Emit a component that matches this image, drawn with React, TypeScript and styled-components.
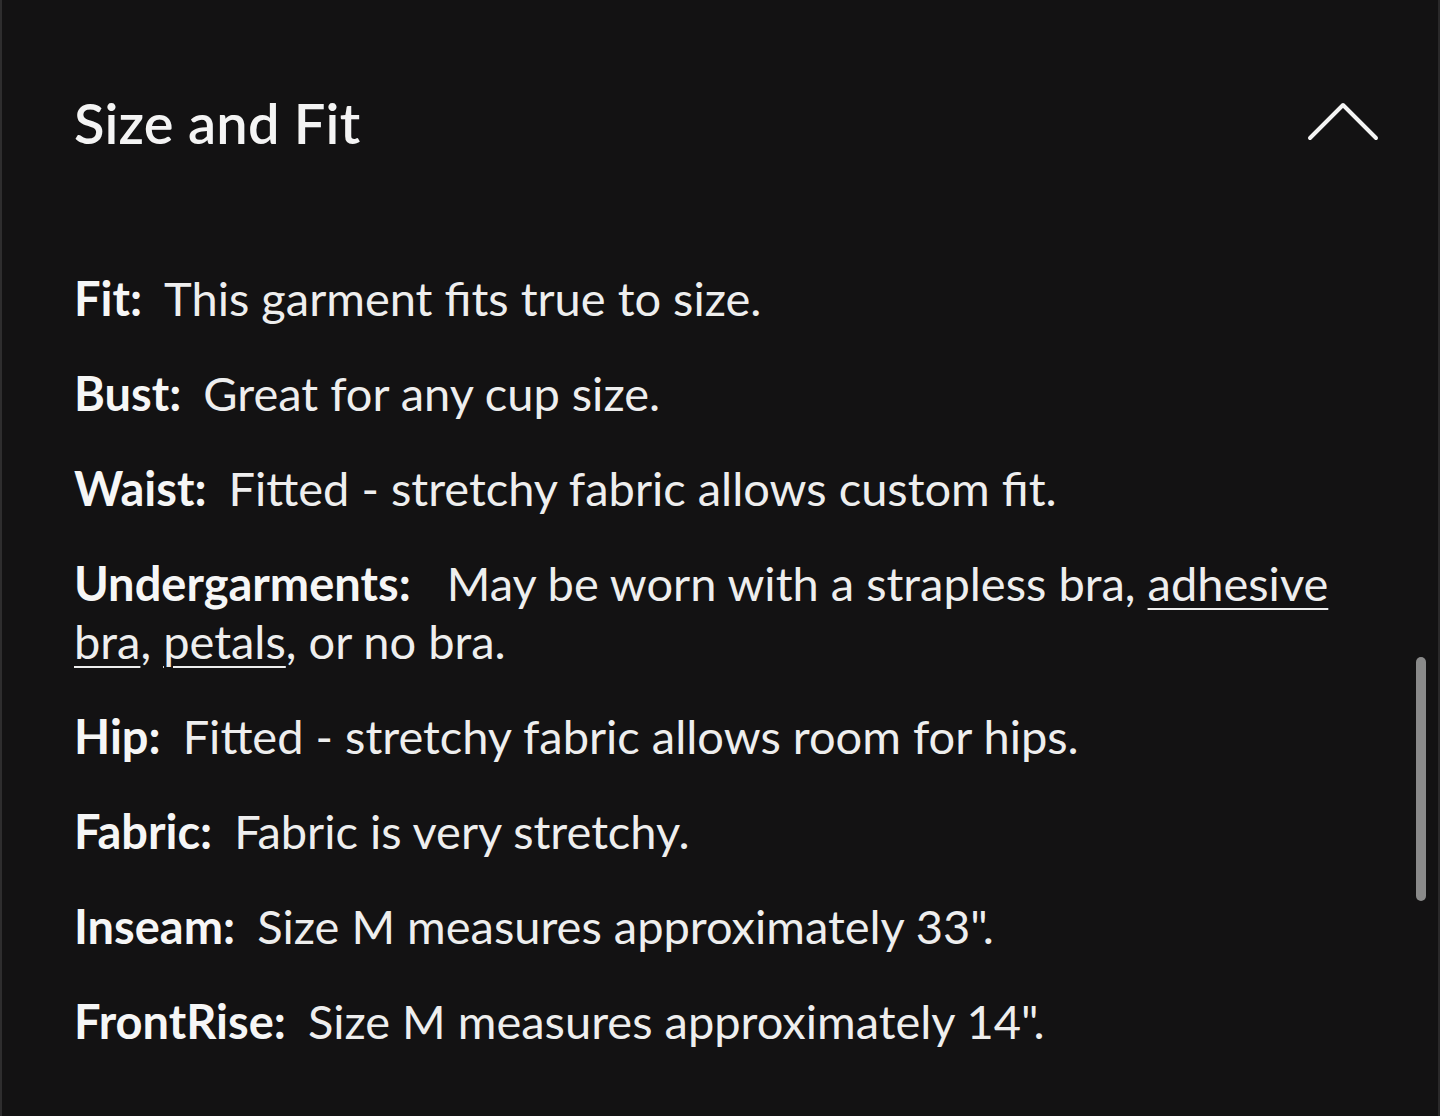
import styled, { createGlobalStyle } from "styled-components";

const GlobalStyle = createGlobalStyle`
  html, body {
    margin: 0;
    padding: 0;
    background: #131213;
  }
  body {
    font-family: Lato, "Open Sans", sans-serif;
    -webkit-font-smoothing: antialiased;
  }
`;

const Panel = styled.section`
  position: relative;
  box-sizing: border-box;
  width: 1440px;
  height: 1116px;
  overflow: hidden;
  background: #131213;
  border-left: 2px solid #2e2d2e;
  border-right: 2px solid #2a292a;
  padding: 0 58px 0 72px;
  color: #f2f2f2;
`;

const Header = styled.header`
  display: flex;
  align-items: center;
  justify-content: space-between;
  height: 244px;
`;

const Title = styled.h2`
  margin: 0;
  font-size: 56px;
  font-weight: 600;
  letter-spacing: 0.2px;
  color: #f4f4f4;
`;

const Toggle = styled.button`
  display: flex;
  align-items: center;
  justify-content: center;
  width: 74px;
  height: 44px;
  padding: 0;
  border: 0;
  background: none;
  color: #f4f4f4;
  cursor: pointer;
`;

const List = styled.dl`
  display: flex;
  flex-direction: column;
  gap: 37px;
  margin: 0;
  padding-top: 25px;
`;

const Row = styled.div`
  font-size: 47px;
  line-height: 58px;
  color: #eeeeee;
`;

const Label = styled.dt<{ $gap: number }>`
  display: inline;
  font-weight: 700;
  color: #f6f6f6;
  margin-right: ${(p) => p.$gap}px;
`;

const Value = styled.dd`
  display: inline;
  margin: 0;
`;

const TextLink = styled.a`
  color: inherit;
  text-decoration: underline;
  text-decoration-thickness: 2px;
  text-underline-offset: 7px;
`;

const ScrollThumb = styled.div`
  position: absolute;
  right: 12px;
  top: 657px;
  width: 10px;
  height: 244px;
  border-radius: 5px;
  background: #8a8a8a;
`;

const Chevron = () => (
  <svg width="74" height="42" viewBox="0 0 74 42" fill="none">
    <path
      d="M4 37 L37 4 L70 37"
      stroke="currentColor"
      strokeWidth="4"
      strokeLinecap="round"
      strokeLinejoin="round"
    />
  </svg>
);

const rows = [
  { label: "Fit:", gap: 22, value: "This garment fits true to size." },
  { label: "Bust:", gap: 22, value: "Great for any cup size." },
  { label: "Waist:", gap: 22, value: "Fitted - stretchy fabric allows custom fit." },
  { label: "Undergarments:", gap: 36, value: null },
  { label: "Hip:", gap: 22, value: "Fitted - stretchy fabric allows room for hips." },
  { label: "Fabric:", gap: 22, value: "Fabric is very stretchy." },
  { label: "Inseam:", gap: 22, value: "Size M measures approximately 33\"." },
  { label: "FrontRise:", gap: 22, value: "Size M measures approximately 14\"." },
];

export default function App() {
  return (
    <>
      <GlobalStyle />
      <Panel>
        <Header>
          <Title>Size and Fit</Title>
          <Toggle aria-label="Collapse">
            <Chevron />
          </Toggle>
        </Header>
        <List>
          {rows.map((r) => (
            <Row key={r.label}>
              <Label $gap={r.gap}>{r.label}</Label>
              <Value>
                {r.value ?? (
                  <>
                    May be worn with a strapless bra, <TextLink href="#">adhesive bra</TextLink>,{" "}
                    <TextLink href="#">petals</TextLink>, or no bra.
                  </>
                )}
              </Value>
            </Row>
          ))}
        </List>
        <ScrollThumb />
      </Panel>
    </>
  );
}
